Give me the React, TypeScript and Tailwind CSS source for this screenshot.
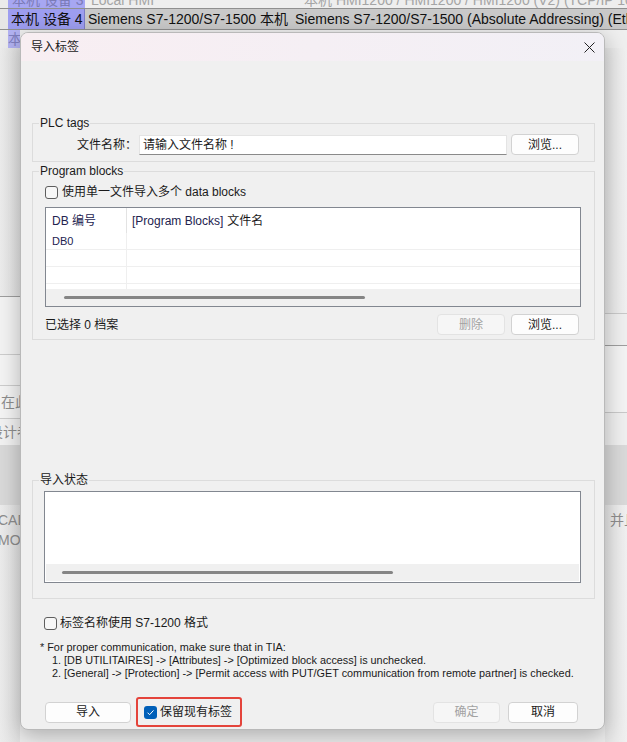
import React from "react";

type Children = { children?: React.ReactNode; className?: string };

function Checkbox({ checked = false }: { checked?: boolean }) {
  if (checked) {
    return (
      <span className="flex h-[13px] w-[13px] shrink-0 items-center justify-center rounded-[3px] bg-[#005fb8]">
        <svg width="9" height="9" viewBox="0 0 9 9">
          <path d="M1.6 4.7 L3.6 6.7 L7.5 2.4" fill="none" stroke="white" strokeWidth="1" />
        </svg>
      </span>
    );
  }
  return <span className="h-[13px] w-[13px] shrink-0 rounded-[3px] border border-[#5e5e5e] bg-[#f7f7f7]" />;
}

function Button({
  children,
  className = "",
  disabled = false,
}: Children & { disabled?: boolean }) {
  return (
    <div
      className={`flex h-[21px] shrink-0 items-center justify-center rounded-[4px] border text-[12px] ${
        disabled
          ? "border-[#e3e3e3] bg-[#f6f6f6] text-[#a2a2a2]"
          : "border-[#d2d2d2] bg-[#fdfdfd] text-[#1a1a1a]"
      } ${className}`}
    >
      {children}
    </div>
  );
}

function Group({ title, children, className = "" }: Children & { title: string }) {
  return (
    <fieldset className={`border border-[#dcdcdc] ${className}`}>
      <legend className="ml-[6px] px-px text-[12px] leading-[16px] text-[#1a1a1a]">{title}</legend>
      {children}
    </fieldset>
  );
}

function ScrollTrack({ left, width }: { left: string; width: string }) {
  return (
    <div className="h-[17px] shrink-0 bg-[#f0f0f0] pt-[7px]">
      <div className={`h-[3px] rounded-full bg-[#858585] ${left} ${width}`} />
    </div>
  );
}

function BlocksTable() {
  const rows = ["DB0", "", ""];
  return (
    <div className="mt-[7px] flex h-[100px] w-[536px] flex-col border border-[#828790] bg-white text-[12px]">
      <div className="flex h-[25px] shrink-0 text-[#23234f]">
        <div className="flex w-[81px] items-center border-r border-[#e3e3e3] pl-[6px]">DB 编号</div>
        <div className="flex items-center pl-[5px]">
          [Program Blocks] <span className="ml-[4px] text-[#1a1a1a]">文件名</span>
        </div>
      </div>
      {rows.map((r, i) => (
        <div key={i} className="flex h-[17px] shrink-0 border-b border-[#efefef]">
          <div className="flex w-[81px] items-center border-r border-[#efefef] pl-[6px] text-[11px] text-[#23234f]">
            {r}
          </div>
        </div>
      ))}
      <div className="flex flex-1">
        <div className="w-[81px] border-r border-[#efefef]" />
      </div>
      <ScrollTrack left="ml-[18px]" width="w-[301px]" />
    </div>
  );
}

function Dialog() {
  return (
    <div className="absolute left-[20px] top-[32px] flex h-[698px] w-[585px] flex-col overflow-hidden rounded-[8px] border border-[#b9b9b9] bg-[#f0f0f0] shadow-[0_6px_22px_rgba(0,0,0,0.28)]">
      {/* title bar */}
      <div className="flex h-[28px] shrink-0 items-center bg-gradient-to-r from-[#f8eef2] to-[#f2f0f6]">
        <span className="pl-[10px] text-[12px] text-[#1a1a1a]">导入标签</span>
        <div className="ml-auto flex w-[30px] justify-center">
          <svg width="11" height="11" viewBox="0 0 11 11">
            <path d="M0.5 0.5 L10.5 10.5 M10.5 0.5 L0.5 10.5" stroke="#222" strokeWidth="1" />
          </svg>
        </div>
      </div>

      {/* body */}
      <div className="flex flex-1 flex-col pl-[11px] pr-[9px]">
        <Group title="PLC tags" className="mt-[54px]">
          <div className="mb-[6px] mt-[3px] flex h-[21px] items-center">
            <span className="w-[104px] text-right text-[12px] text-[#1a1a1a]">文件名称：</span>
            <div className="ml-[2px] flex h-[20px] w-[368px] items-center border border-[#e4e4e4] border-b-[#8a8a8a] bg-white pl-[3px] text-[12px] text-[#1a1a1a]">
              请输入文件名称 !
            </div>
            <Button className="ml-[4px] w-[68px]">浏览...</Button>
          </div>
        </Group>

        <Group title="Program blocks" className="mt-[1px]">
          <div className="pl-[12px]">
            <div className="mt-[5px] flex h-[16px] items-center gap-[4px] text-[12px] text-[#1a1a1a]">
              <Checkbox />
              <span>使用单一文件导入多个 data blocks</span>
            </div>
            <BlocksTable />
            <div className="mb-[4px] mt-[7px] flex h-[21px] items-center pr-[15px] text-[12px] text-[#1a1a1a]">
              <span>已选择 0 档案</span>
              <Button disabled className="ml-auto w-[68px]">
                删除
              </Button>
              <Button className="ml-[6px] w-[68px]">浏览...</Button>
            </div>
          </div>
        </Group>

        <Group title="导入状态" className="mt-[132px]">
          <div className="mb-[15px] ml-[11px] mt-[3px] flex h-[92px] w-[537px] flex-col border border-[#828790] bg-white">
            <div className="flex-1" />
            <div className="mx-[1px] mb-[1px]">
              <ScrollTrack left="ml-[16px]" width="w-[331px]" />
            </div>
          </div>
        </Group>

        <div className="ml-[12px] mt-[16px] flex h-[16px] items-center gap-[3px] text-[12px] text-[#1a1a1a]">
          <Checkbox />
          <span>标签名称使用 S7-1200 格式</span>
        </div>

        <div className="ml-[8px] mt-[10px] text-[10.85px] leading-[13px] text-[#1a1a1a]">
          <div>* For proper communication, make sure that in TIA:</div>
          <div className="pl-[12px]">
            1. [DB UTILITAIRES] -&gt; [Attributes] -&gt; [Optimized block access] is unchecked.
          </div>
          <div className="pl-[12px]">
            2. [General] -&gt; [Protection] -&gt; [Permit access with PUT/GET communication from remote partner] is
            checked.
          </div>
        </div>

        <div className="mt-[17px] flex h-[30px] items-center">
          <Button className="ml-[13px] w-[86px]">导入</Button>
          <div className="ml-[5px] flex h-[30px] w-[106px] items-center gap-[3px] rounded-[3px] border-2 border-[#e4443b] pl-[6px] text-[12px] text-[#1a1a1a]">
            <Checkbox checked />
            <span>保留现有标签</span>
          </div>
          <Button disabled className="ml-auto w-[67px]">
            确定
          </Button>
          <Button className="ml-[8px] mr-[17px] w-[70px]">取消</Button>
        </div>
      </div>
    </div>
  );
}

function Backdrop() {
  return (
    <div className="flex h-full flex-col text-[14px]">
      {/* top rows of the window behind */}
      <div className="flex h-[8px] shrink-0 overflow-hidden whitespace-nowrap">
        <div className="w-[8px] shrink-0 bg-[#ebebeb]" />
        <div className="w-[77px] shrink-0 overflow-hidden bg-[#a7a7f2] pl-[4px] leading-[14px] text-[#7b7bb8] [margin-top:-7px]">
          本机 设备 3
        </div>
        <div className="flex-1 overflow-hidden bg-[#eeeeee] pl-[6px] leading-[14px] text-[#a5a5a5] [margin-top:-7px]">
          Local HMI<span className="ml-[150px]">本机 HMI1200 / HMI1200 / HMI1200 (V2) (TCP/IP 100)</span>
        </div>
      </div>
      <div className="flex h-[22px] shrink-0 overflow-hidden whitespace-nowrap border-y border-[#8f8f8f] leading-[20px] text-[#111]">
        <div className="w-[8px] shrink-0 bg-[#e6e6e6]" />
        <div className="w-[77px] shrink-0 overflow-hidden border-r border-[#7d7dc8] bg-[#9d9df0] pl-[3px]">本机 设备 4</div>
        <div className="flex-1 overflow-hidden bg-[#c9c9c9] pl-[3px]">
          Siemens S7-1200/S7-1500 本机<span className="ml-[7px]">Siemens S7-1200/S7-1500 (Absolute Addressing) (Ethernet)</span>
        </div>
      </div>
      <div className="flex h-[18px] shrink-0 leading-[18px]">
        <div className="w-[8px] shrink-0 bg-[#ececec]" />
        <div className="w-[12px] shrink-0 overflow-hidden whitespace-nowrap bg-[#b3b3f3] text-[#8080c0]">本</div>
        <div className="flex-1 bg-[#efefef]" />
      </div>

      <div className="flex flex-1">
        {/* left strip */}
        <div className="flex w-[20px] flex-col overflow-hidden bg-gradient-to-r from-[#ececec] to-[#e2e2e2] text-[14px] text-[#8d8d8d]">
          <div className="h-[248px] shrink-0" />
          <div className="h-px shrink-0 bg-[#9e9e9e]" />
          <div className="h-[57px] shrink-0 bg-[#f3f3f3]" />
          <div className="h-px shrink-0 bg-[#cdcdcd]" />
          <div className="h-[30px] shrink-0 bg-[#f4f4f4]" />
          <div className="h-px shrink-0 bg-[#cdcdcd]" />
          <div className="flex h-[32px] shrink-0 items-center whitespace-nowrap bg-[#f4f4f4] pl-px">在此</div>
          <div className="h-px shrink-0 bg-[#cdcdcd]" />
          <div className="flex h-[26px] shrink-0 items-center whitespace-nowrap bg-[#f2f2f2] [text-indent:-11px]">设计者</div>
          <div className="h-[60px] shrink-0 bg-[#d9d9d9]" />
          <div className="shrink-0 whitespace-nowrap pt-[5px] leading-[20px] [text-indent:-2px]">
            <div>CAD</div>
            <div>MOD</div>
          </div>
        </div>

        <div className="flex-1" />

        {/* right strip */}
        <div className="flex w-[22px] flex-col overflow-hidden bg-gradient-to-r from-[#e6e6e6] to-[#f0f0f0] text-[14px] text-[#8d8d8d]">
          <div className="h-[265px] shrink-0" />
          <div className="h-px shrink-0 bg-[#c9c9c9]" />
          <div className="h-[31px] shrink-0 bg-[#efefef]" />
          <div className="h-px shrink-0 bg-[#9e9e9e]" />
          <div className="h-[66px] shrink-0 bg-[#f3f3f3]" />
          <div className="h-px shrink-0 bg-[#c9c9c9]" />
          <div className="h-[32px] shrink-0 bg-[#efefef]" />
          <div className="h-[60px] shrink-0 bg-[#d9d9d9]" />
          <div className="shrink-0 whitespace-nowrap pl-[5px] pt-[5px] leading-[20px]">并且</div>
        </div>
      </div>
    </div>
  );
}

export default function App() {
  return (
    <div className="relative h-[742px] w-[627px] overflow-hidden bg-[#efefef] font-['Liberation_Sans','Noto_Sans_CJK_SC',sans-serif]">
      <Backdrop />
      <Dialog />
    </div>
  );
}
